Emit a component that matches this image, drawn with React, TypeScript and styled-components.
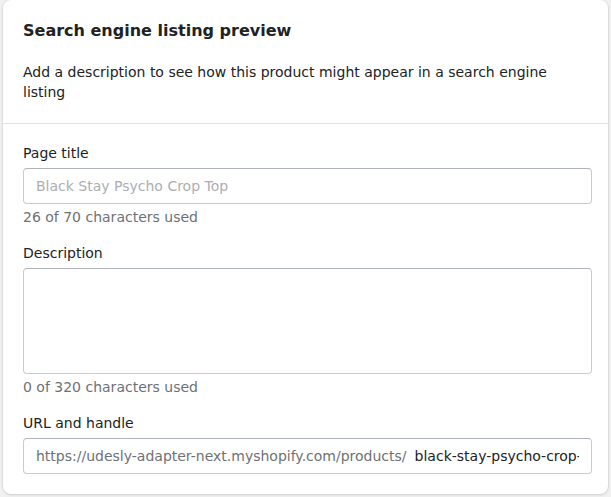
import React from "react";
import styled, { createGlobalStyle } from "styled-components";

const Global = createGlobalStyle`
  html, body { margin: 0; padding: 0; background: #f1f1f1; }
  body { font-family: "DejaVu Sans", sans-serif; color: #202223; }
  * { box-sizing: border-box; }
`;

const Page = styled.div`
  padding: 0 3px 3px 3px;
`;

const Card = styled.div`
  background: #ffffff;
  border-radius: 8px;
  box-shadow: 0 0 0 1px rgba(63, 63, 68, 0.05), 0 1px 3px rgba(63, 63, 68, 0.15);
  overflow: hidden;
`;

const Header = styled.div`
  padding: 19px 17px 21px 20px;
  display: flex;
  flex-direction: column;
`;

const Body = styled.div`
  padding: 19px 16px 20px 20px;
  border-top: 1px solid #e1e3e5;
  display: flex;
  flex-direction: column;
`;

const Title = styled.h2`
  margin: 0;
  font-size: 16px;
  font-weight: 700;
  line-height: 24px;
  color: #202223;
`;

const Intro = styled.p`
  margin: 19px 0 0 0;
  font-size: 14px;
  line-height: 20px;
  color: #202223;
`;

const Field = styled.div`
  display: flex;
  flex-direction: column;
  & + & {
    margin-top: 16px;
  }
`;

const Label = styled.label`
  font-size: 14px;
  line-height: 20px;
  margin-bottom: 5px;
  color: #202223;
`;

const Box = styled.div<{ $tall?: boolean }>`
  display: flex;
  align-items: center;
  height: ${(p) => (p.$tall ? "106px" : "36px")};
  border: 1px solid #c9cccf;
  border-top-color: #aeb4b9;
  border-radius: 4px;
  padding: 0 12px;
  background: #fff;
`;

const Clip = styled.div`
  display: flex;
  align-items: center;
  overflow: hidden;
  white-space: nowrap;
  min-width: 0;
  flex: 1;
`;

const Placeholder = styled.span`
  font-size: 14px;
  color: #abaeb2;
`;

const Prefix = styled.span`
  font-size: 14px;
  color: #6d7175;
  flex-shrink: 0;
`;

const Value = styled.span`
  font-size: 14px;
  color: #202223;
  margin-left: 8px;
  flex-shrink: 0;
`;

const Help = styled.div`
  font-size: 14px;
  line-height: 20px;
  color: #6d7175;
  margin-top: 3px;
`;

export default function App() {
  return (
    <>
      <Global />
      <Page>
        <Card>
          <Header>
            <Title>Search engine listing preview</Title>
            <Intro>
              Add a description to see how this product might appear in a search engine listing
            </Intro>
          </Header>
          <Body>
            <Field>
              <Label>Page title</Label>
              <Box>
                <Placeholder>Black Stay Psycho Crop Top</Placeholder>
              </Box>
              <Help>26 of 70 characters used</Help>
            </Field>
            <Field>
              <Label>Description</Label>
              <Box $tall />
              <Help>0 of 320 characters used</Help>
            </Field>
            <Field>
              <Label>URL and handle</Label>
              <Box>
                <Clip>
                  <Prefix>https://udesly-adapter-next.myshopify.com/products/</Prefix>
                  <Value>black-stay-psycho-crop-top</Value>
                </Clip>
              </Box>
            </Field>
          </Body>
        </Card>
      </Page>
    </>
  );
}
